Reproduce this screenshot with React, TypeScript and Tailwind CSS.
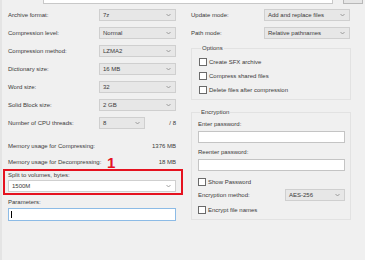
import React from 'react'

function Chevron() {
  return (
    <svg width="5" height="4" viewBox="0 0 5 4" className="shrink-0">
      <polyline points="0.5,1 2.5,3 4.5,1" fill="none" stroke="#8a8a8a" strokeWidth="0.8" />
    </svg>
  )
}

function Combo({ value, className }: { value: string; className: string }) {
  return (
    <div
      className={`flex h-[12px] items-center justify-between border border-[#cfcfcf] bg-[#e7e7e7] pl-[3px] pr-[4px] ${className}`}
    >
      <span>{value}</span>
      <Chevron />
    </div>
  )
}

function Check({ label, className = '' }: { label: string; className?: string }) {
  return (
    <div className={`flex h-[14px] items-center gap-[2px] ${className}`}>
      <div className="h-[8px] w-[8px] border border-[#6a6a6a] bg-white" />
      <span>{label}</span>
    </div>
  )
}

function Row({ label, children }: { label: string; children: React.ReactNode }) {
  return (
    <div className="flex h-[18px] items-center">
      <span className="w-[91px] shrink-0">{label}</span>
      {children}
    </div>
  )
}

export default function App() {
  return (
    <div className="relative h-[260px] w-[365px] overflow-hidden border-l-2 border-[#e4e4e4] bg-[#f0f0f0] font-['Liberation_Sans',Arial,sans-serif] text-[6px] leading-[8px] text-[#3a3a3a]">
      {/* top edge of the archive path box and browse button */}
      <div className="flex h-[4px]">
        <div className="ml-[41px] w-[290px] border-x border-b border-[#c8c8c8] bg-white" />
        <div className="ml-[10px] w-[20px] border-x border-b border-[#b8b8b8] bg-[#e6e6e6]" />
      </div>

      <div className="flex">
        {/* left column */}
        <div className="ml-[6px] mt-[2px] w-[168px]">
          <Row label="Archive format:">
            <Combo value="7z" className="w-[77px]" />
          </Row>
          <Row label="Compression level:">
            <Combo value="Normal" className="w-[77px]" />
          </Row>
          <Row label="Compression method:">
            <Combo value="LZMA2" className="w-[77px]" />
          </Row>
          <Row label="Dictionary size:">
            <Combo value="16 MB" className="w-[77px]" />
          </Row>
          <Row label="Word size:">
            <Combo value="32" className="w-[77px]" />
          </Row>
          <Row label="Solid Block size:">
            <Combo value="2 GB" className="w-[77px]" />
          </Row>
          <Row label="Number of CPU threads:">
            <Combo value="8" className="w-[46px]" />
            <span className="ml-auto">/ 8</span>
          </Row>

          <div className="mt-[7px] flex h-[14px] items-center justify-between">
            <span>Memory usage for Compressing:</span>
            <span>1376 MB</span>
          </div>
          <div className="mt-[2px] flex h-[14px] items-center justify-between">
            <span>Memory usage for Decompressing:</span>
            <span>18 MB</span>
          </div>

          <div className="-ml-[5px] -mr-[7px] border-2 border-[#e5121f] pb-[1px] pl-[3px] pr-[5px]">
            <div className="h-[8px]">Split to volumes, bytes:</div>
            <Combo value="1500M" className="mt-[1px] w-full bg-white" />
          </div>

          <div className="mt-[3px] h-[8px]">Parameters:</div>
          <div className="mt-[2px] flex h-[13px] items-center border border-[#8cbbe6] bg-white pl-[2px]">
            <div className="h-[7px] w-px bg-black" />
          </div>
        </div>

        {/* right column */}
        <div className="ml-[15px] mt-[2px] w-[160px]">
          <div className="flex h-[18px] items-center">
            <span className="w-[73px] shrink-0">Update mode:</span>
            <Combo value="Add and replace files" className="w-[86px]" />
          </div>
          <div className="flex h-[18px] items-center">
            <span className="w-[73px] shrink-0">Path mode:</span>
            <Combo value="Relative pathnames" className="w-[86px]" />
          </div>

          <fieldset className="mt-[2px] border border-[#e2e2e2] pb-[2px] pl-[7px]">
            <legend className="ml-[2px] px-[1px] leading-[8px]">Options</legend>
            <Check label="Create SFX archive" className="mt-[3px]" />
            <Check label="Compress shared files" />
            <Check label="Delete files after compression" />
          </fieldset>

          <fieldset className="mt-[8px] border border-[#e2e2e2] pb-[2px] pl-[6px] pr-[5px]">
            <legend className="ml-[2px] px-[1px] leading-[8px]">Encryption</legend>
            <div className="mt-[2px] flex h-[12px] items-center">Enter password:</div>
            <div className="mt-[1px] h-[12px] border border-[#c4c4c4] bg-white" />
            <div className="mt-[3px] flex h-[12px] items-center">Reenter password:</div>
            <div className="mt-[1px] h-[12px] border border-[#c4c4c4] bg-white" />
            <Check label="Show Password" className="mt-[4px]" />
            <div className="flex h-[12px] items-center justify-between">
              <span>Encryption method:</span>
              <Combo value="AES-256" className="w-[60px]" />
            </div>
            <Check label="Encrypt file names" className="mt-[2px]" />
          </fieldset>
        </div>
      </div>

      {/* annotation marker */}
      <span className="absolute left-[105px] top-[155px] text-[15px] font-bold leading-[15px] text-[#e5121f]">1</span>
    </div>
  )
}
